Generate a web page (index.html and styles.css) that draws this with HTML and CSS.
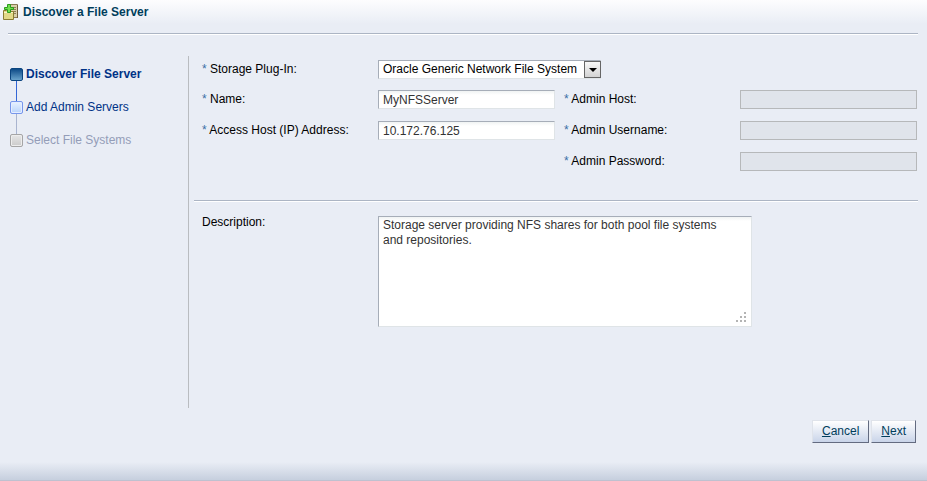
FILE: index.html
```html
<!DOCTYPE html>
<html lang="en">
<head>
    <meta charset="UTF-8">
    <meta name="viewport" content="width=device-width, initial-scale=1.0">
    <title>Discover a File Server</title>
    <link rel="stylesheet" href="styles.css">
</head>
<body>
    <form class="wizard">
        <header class="wizard-header">
            <svg class="icon" width="16" height="16" viewBox="0 0 16 16" aria-hidden="true">
                <path d="M6.500 .5h8v13h-8z" fill="#d9cfa8" stroke="#8a7a52"/>
                <path d="M10 3.500h3M10 5.500h3M10 7.500h3M11 9.500h2" stroke="#8e7d56"/>
                <path d="M14.500 1v13" stroke="#6f5c3a"/>
                <path d="M.5 6.500h3l1 1h6v8H.5z" fill="#e2d888" stroke="#8a7c32"/>
                <path d="M1 8.500h9" stroke="#faf6c8"/>
                <path d="M4.500 .5h3v3h3v2h-3v3h-3v-3h-3v-2h3z" fill="#6fe04c" stroke="#2c9a1d"/>
            </svg>
            <h1>Discover a File Server</h1>
        </header>
        <hr class="rule">
        <div class="wizard-body">
            <nav class="steps">
                <ol>
                    <li class="step current"><span class="box"></span><a href="#" aria-current="step">Discover File Server</a></li>
                    <li class="step next"><span class="box"></span><a href="#">Add Admin Servers</a></li>
                    <li class="step disabled"><span class="box"></span><span>Select File Systems</span></li>
                </ol>
            </nav>
            <main class="content">
                <div class="fields">
                    <label for="plugin"><span class="req">*</span> Storage Plug-In:</label>
                    <div class="select">
                        <select id="plugin">
                            <option>Oracle Generic Network File System</option>
                        </select>
                        <span class="arrow"></span>
                    </div>

                    <label for="name"><span class="req">*</span> Name:</label>
                    <input id="name" type="text" value="MyNFSServer">
                    <label class="second" for="adminHost"><span class="req">*</span> Admin Host:</label>
                    <input id="adminHost" type="text" disabled>

                    <label for="accessHost"><span class="req">*</span> Access Host (IP) Address:</label>
                    <input id="accessHost" type="text" value="10.172.76.125">
                    <label class="second" for="adminUser"><span class="req">*</span> Admin Username:</label>
                    <input id="adminUser" type="text" disabled>

                    <label class="second last" for="adminPassword"><span class="req">*</span> Admin Password:</label>
                    <input id="adminPassword" type="password" disabled>
                </div>
                <hr class="rule">
                <div class="description">
                    <label for="description">Description:</label>
                    <div class="area">
                        <textarea id="description">Storage server providing NFS shares for both pool file systems and repositories.</textarea>
                        <svg class="grip" width="10" height="10" viewBox="0 0 10 10" aria-hidden="true">
                            <path d="M8 0h2v2H8zM4 4h2v2H4zM8 4h2v2H8zM0 8h2v2H0zM4 8h2v2H4zM8 8h2v2H8z" fill="#b4b4b4"/>
                        </svg>
                    </div>
                </div>
            </main>
        </div>
        <footer class="wizard-footer">
            <button type="button"><u>C</u>ancel</button>
            <button type="submit"><u>N</u>ext</button>
        </footer>
    </form>
</body>
</html>
```
FILE: styles.css
```css
* {
    box-sizing: border-box;
}
body {
    margin: 0;
    background-color: #e9edf5;
    font-family: "Liberation Sans", Arial, sans-serif;
    font-size: 12px;
    line-height: 15px;
    color: #000;
}
input, select, textarea, button {
    font: inherit;
    margin: 0;
    border-radius: 0;
}

/* Window */
.wizard {
    display: flex;
    flex-direction: column;
    min-height: 100vh;
    border-bottom: 1px solid #bfc1d0;
    background: linear-gradient(to top, #c6cfde, #e9edf5 18px, transparent 18px),
        linear-gradient(#fdfdfe, #e9edf5 24px);
}
.wizard-header {
    display: flex;
    align-items: center;
    gap: 4px;
    height: 24px;
    padding-left: 3px;
}
.wizard-header h1 {
    margin: 0;
    font-size: 12px;
    color: #003d5b;
}
.rule {
    height: 2px;
    margin: 0;
    border: 0;
    border-top: 1px solid #acb5c4;
    background-color: #fff;
}
.wizard > .rule {
    margin: 9px 9px 0 8px;
}
.wizard-body {
    display: flex;
    flex: 1;
    margin-top: 21px;
}

/* Steps */
.steps {
    width: 189px;
    border-right: 1px solid #b9bcc0;
}
.steps ol {
    margin: 0;
    padding: 12px 0 0 10px;
    list-style: none;
}
.step {
    display: grid;
    grid-template-columns: 13px 1fr;
    grid-template-rows: 13px 20px;
    column-gap: 3px;
    align-items: center;
    color: #949db8;
}
.step:not(:last-child)::after {
    content: "";
    justify-self: center;
    width: 1px;
    height: 20px;
    background-color: #3366d6;
}
.step.next::after {
    background-color: #a9b4cf;
}
.step a {
    color: #003286;
    text-decoration: none;
}
.step.current a {
    font-weight: bold;
}
.box {
    height: 13px;
    border: 1px solid #7796ec;
    border-radius: 2px;
    background: linear-gradient(#e9f2ff, #b8d3fb);
    box-shadow: inset 0 0 0 1px #e4edff;
}
.current .box {
    border-color: #0b4580;
    background: linear-gradient(#0d4a87, #69a3cc);
    box-shadow: none;
}
.disabled .box {
    border-color: #a5a5a5;
    background: linear-gradient(#e6e6e6, #cbcbcb);
    box-shadow: inset 0 0 0 1px #ededed;
}

/* Form */
.content {
    flex: 1;
    padding: 4px 9px 0 5px;
}
.fields {
    display: grid;
    grid-template-columns: 176px 1fr 185px 1fr;
    grid-template-rows: 18px;
    grid-auto-rows: 19px;
    row-gap: 12px;
    padding: 0 1px 29px 8px;
}
.fields label {
    line-height: 18px;
}
.fields .second {
    padding-left: 9px;
}
.fields .last {
    grid-column: 3;
}
.req {
    color: #3b6ea5;
}
input, select, textarea {
    width: 100%;
    border: 1px solid;
    border-color: #a6adb8 #dfe4e7 #dfe4e7 #a6adb8;
    background: #fff linear-gradient(#f0f3f3, #fff 4px);
    color: #333;
    outline: 0;
}
input {
    height: 19px;
    padding: 1px 4px 0;
}
input:disabled {
    border-color: #b6b8ba;
    background: #e0e4eb;
}
.select {
    position: relative;
    grid-column: 2 / -1;
    justify-self: start;
    width: 223px;
}
select {
    display: block;
    height: 19px;
    padding: 0 18px 0 4px;
    appearance: none;
    background: #fff;
    color: #000;
}
.arrow {
    position: absolute;
    top: 1px;
    right: 0;
    display: flex;
    align-items: center;
    justify-content: center;
    width: 17px;
    height: 17px;
    border: 1px solid #666;
    background: linear-gradient(#f8f8f8, #d3d3d3);
    pointer-events: none;
}
.arrow::before {
    content: "";
    border: 4px solid transparent;
    border-top-color: #000;
    border-bottom: 0;
}
.description {
    display: grid;
    grid-template-columns: 176px 1fr;
    padding: 14px 0 0 8px;
}
.description label {
    line-height: 12px;
}
.area {
    position: relative;
    max-width: 374px;
}
textarea {
    display: block;
    height: 111px;
    padding: 1px 20px 1px 4px;
    resize: none;
}
.grip {
    position: absolute;
    right: 6px;
    bottom: 5px;
}

/* Buttons */
.wizard-footer {
    display: flex;
    justify-content: flex-end;
    gap: 2px;
    padding: 12px 11px 37px;
}
button {
    height: 23px;
    padding: 0 9px;
    border: 1px solid;
    border-color: #dfe3ea #636b80 #636b80 #dfe3ea;
    background: linear-gradient(#fff, #c9d4e9);
    color: #003d5b;
}
```
